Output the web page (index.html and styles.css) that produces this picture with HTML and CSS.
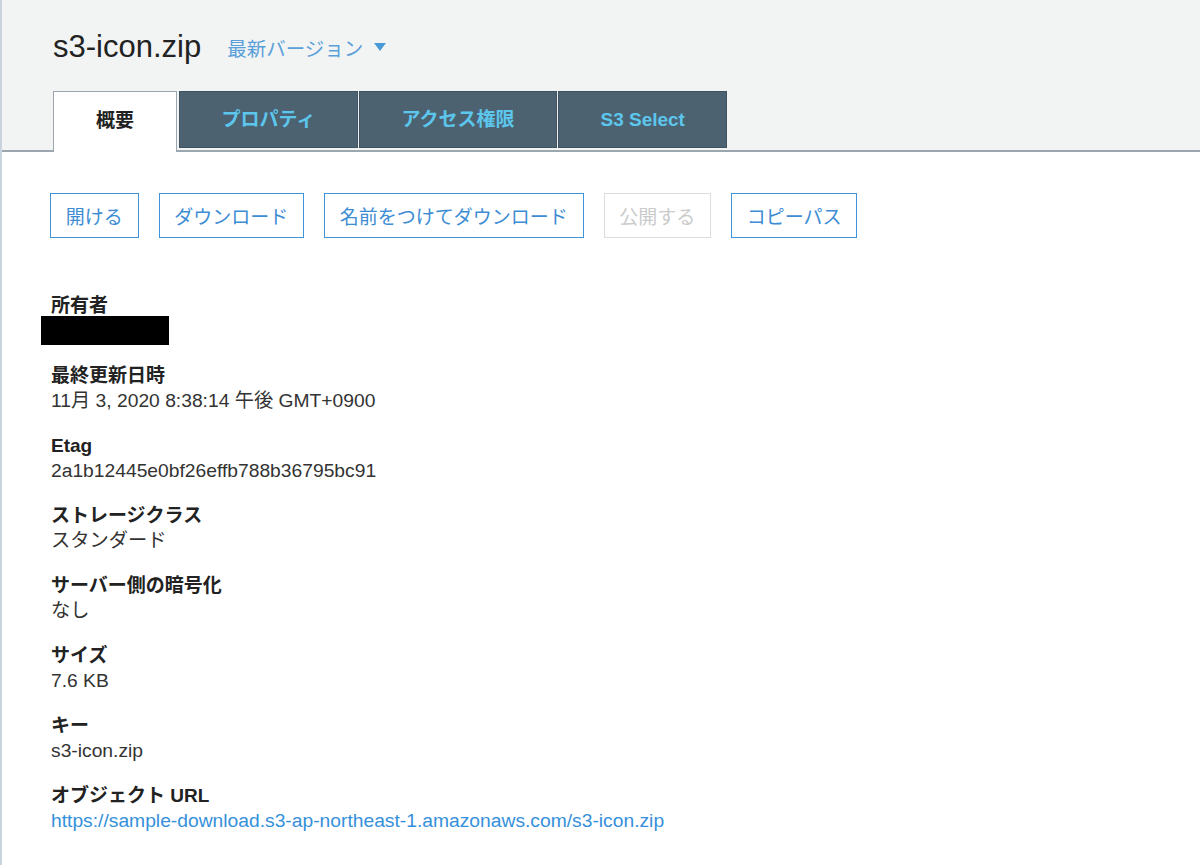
FILE: index.html
```html
<!DOCTYPE html>
<html lang="ja">
<head>
    <meta charset="UTF-8">
    <meta name="viewport" content="width=device-width, initial-scale=1.0">
    <title>s3-icon.zip</title>
    <link rel="stylesheet" href="styles.css">
</head>
<body>
    <div class="header">
        <div class="title-row">
            <h1 class="object-name">s3-icon.zip</h1>
            <a class="version" href="#">最新バージョン <span class="caret"></span></a>
        </div>
        <div class="tabs">
            <div class="tab active">概要</div>
            <div class="tab">プロパティ</div>
            <div class="tab">アクセス権限</div>
            <div class="tab">S3 Select</div>
        </div>
    </div>

    <div class="content">
        <div class="actions">
            <button>開ける</button>
            <button>ダウンロード</button>
            <button>名前をつけてダウンロード</button>
            <button disabled>公開する</button>
            <button>コピーパス</button>
        </div>

        <div class="details">
            <div class="field">
                <div class="label">所有者</div>
                <div class="redacted"></div>
            </div>
            <div class="field">
                <div class="label">最終更新日時</div>
                <div class="value">11月 3, 2020 8:38:14 午後 GMT+0900</div>
            </div>
            <div class="field">
                <div class="label">Etag</div>
                <div class="value">2a1b12445e0bf26effb788b36795bc91</div>
            </div>
            <div class="field">
                <div class="label">ストレージクラス</div>
                <div class="value">スタンダード</div>
            </div>
            <div class="field">
                <div class="label">サーバー側の暗号化</div>
                <div class="value">なし</div>
            </div>
            <div class="field">
                <div class="label">サイズ</div>
                <div class="value">7.6 KB</div>
            </div>
            <div class="field">
                <div class="label">キー</div>
                <div class="value">s3-icon.zip</div>
            </div>
            <div class="field">
                <div class="label">オブジェクト URL</div>
                <div class="value"><a href="#">https://sample-download.s3-ap-northeast-1.amazonaws.com/s3-icon.zip</a></div>
            </div>
        </div>
    </div>
</body>
</html>
```

FILE: styles.css
```css
body {
    font-family: "Liberation Sans", "Noto Sans CJK JP", sans-serif;
    margin: 0;
    min-height: 100vh;
    border-left: 2px solid #c9d2df;
    background-color: #fff;
    color: #222;
}
.header {
    background-color: #f2f4f4;
    height: 150px;
    border-bottom: 2px solid #9ba6ae;
    padding-left: 51px;
    box-sizing: content-box;
}
.title-row {
    display: flex;
    align-items: center;
    height: 36px;
    padding-top: 29px;
}
.object-name {
    font-size: 31px;
    font-weight: normal;
    margin: 0;
    color: #222;
}
.version {
    display: flex;
    align-items: center;
    margin-left: 26px;
    font-size: 19.5px;
    color: #5a9fd8;
    text-decoration: none;
}
.caret {
    width: 0;
    height: 0;
    margin-left: 11px;
    border-left: 6px solid transparent;
    border-right: 6px solid transparent;
    border-top: 8px solid #4a9ad8;
}
.tabs {
    display: flex;
    align-items: flex-start;
    margin-top: 26px;
}
.tab {
    height: 55px;
    line-height: 56px;
    padding: 0 41.5px;
    margin-right: 1px;
    background-color: #4c6271;
    border: 1px solid #3e5261;
    color: #5cc6ec;
    font-size: 19px;
    font-weight: bold;
}
.tab.active {
    height: 60px;
    line-height: 57px;
    padding: 0 42px;
    background-color: #fff;
    border: 1px solid #9ba6ae;
    border-bottom: none;
    color: #222;
    margin-right: 2px;
}
.content {
    padding-left: 48px;
}
.actions {
    display: flex;
    gap: 20px;
    margin-top: 41px;
}
button {
    font-family: inherit;
    font-size: 19px;
    height: 45px;
    padding: 0 14.75px;
    background-color: #fff;
    color: #3d8cd4;
    border: 1px solid #3f93d9;
    border-radius: 0;
    cursor: pointer;
}
button:disabled {
    color: #cbcbcb;
    border-color: #dddddd;
    cursor: default;
}
.details {
    margin-top: 55px;
    padding-left: 1px;
}
.field {
    margin-bottom: 20px;
    font-size: 19px;
    line-height: 25px;
}
.label {
    font-weight: bold;
    color: #222;
}
.value {
    font-size: 19.25px;
    color: #333;
}
.value a {
    color: #3590dc;
    text-decoration: none;
}
.redacted {
    width: 128px;
    height: 29px;
    margin: -2px 0 -2px -10px;
    background-color: #000;
}
```
